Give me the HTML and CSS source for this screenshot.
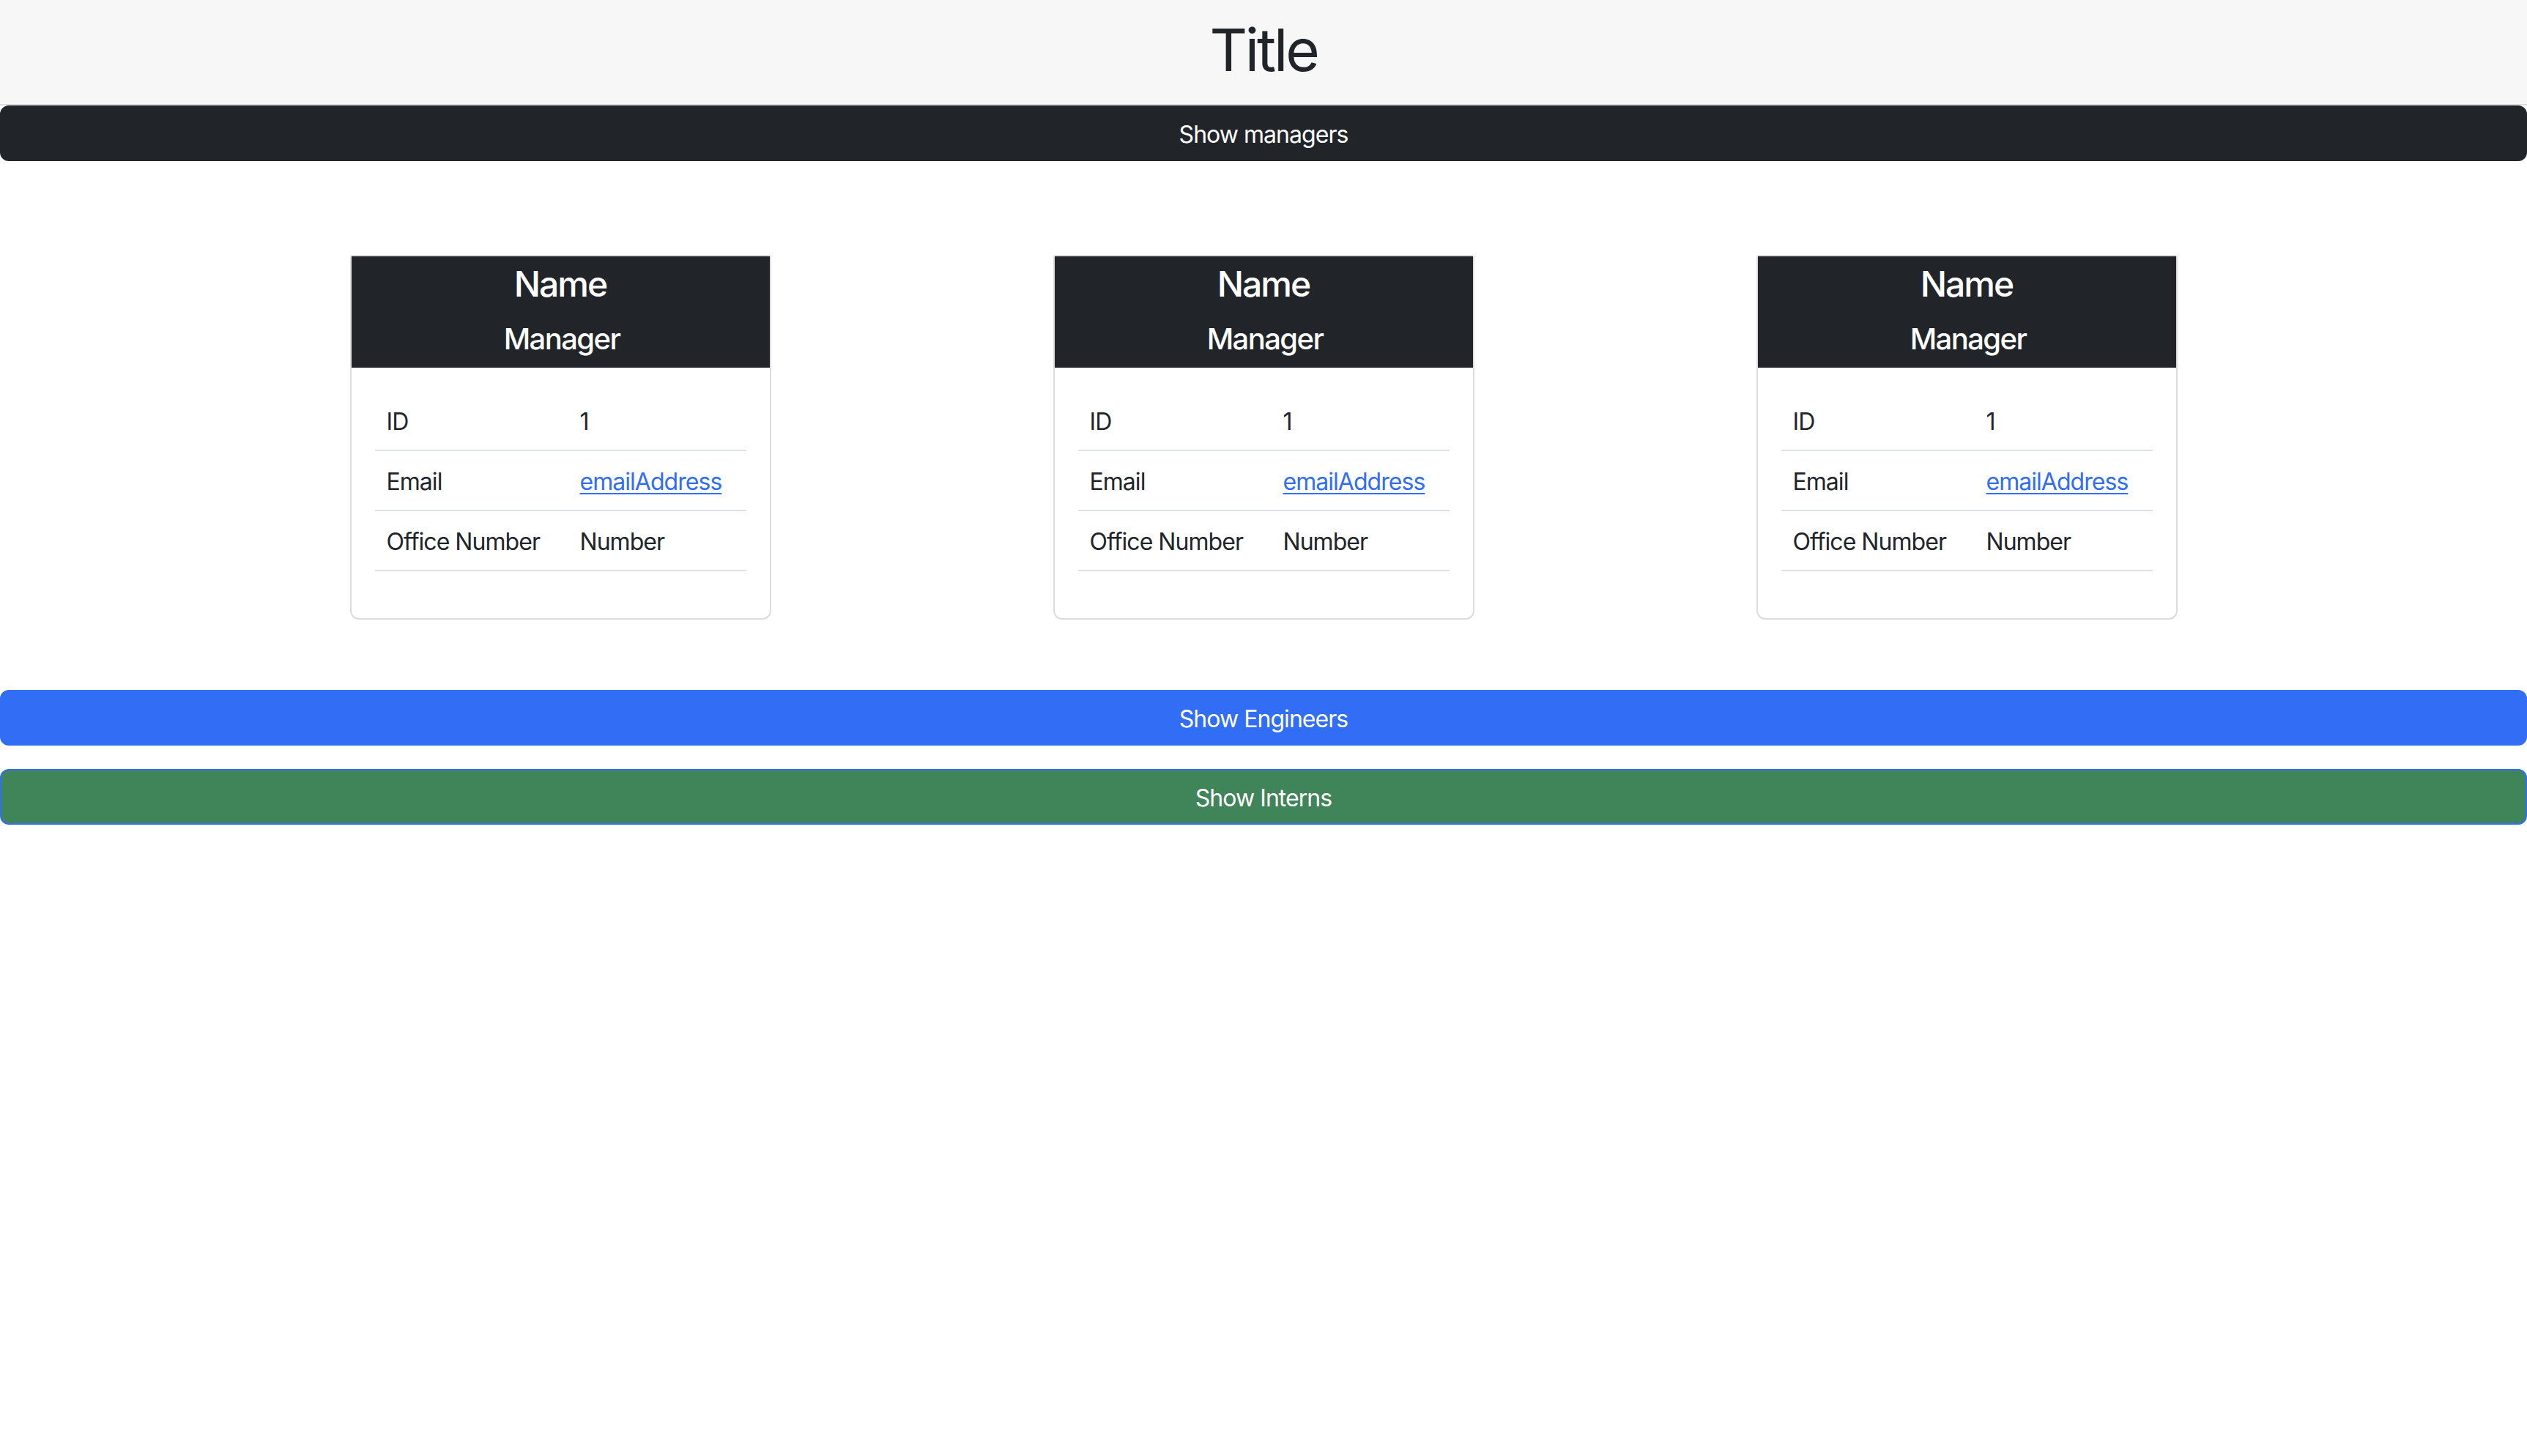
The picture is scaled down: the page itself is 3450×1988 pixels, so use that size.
FILE: index.html
```html
<!DOCTYPE html>
<html lang="en">
<head>
<meta charset="utf-8">
<title>Team</title>
<link rel="stylesheet" href="styles.css">
</head>
<body>
<header class="page-header">
  <h1 class="title">Title</h1>
</header>
<button class="btn btn-dark" type="button">Show managers</button>

<section class="cards">
  <div class="col">
    <article class="card">
      <div class="card-header">
        <h4 class="card-name">Name</h4>
        <h5 class="card-role">Manager</h5>
      </div>
      <div class="card-body">
        <table class="info">
          <tr><td class="label">ID</td><td>1</td></tr>
          <tr><td class="label">Email</td><td><a href="#" class="link">emailAddress</a></td></tr>
          <tr><td class="label">Office Number</td><td>Number</td></tr>
        </table>
      </div>
    </article>
  </div>
  <div class="col">
    <article class="card">
      <div class="card-header">
        <h4 class="card-name">Name</h4>
        <h5 class="card-role">Manager</h5>
      </div>
      <div class="card-body">
        <table class="info">
          <tr><td class="label">ID</td><td>1</td></tr>
          <tr><td class="label">Email</td><td><a href="#" class="link">emailAddress</a></td></tr>
          <tr><td class="label">Office Number</td><td>Number</td></tr>
        </table>
      </div>
    </article>
  </div>
  <div class="col">
    <article class="card">
      <div class="card-header">
        <h4 class="card-name">Name</h4>
        <h5 class="card-role">Manager</h5>
      </div>
      <div class="card-body">
        <table class="info">
          <tr><td class="label">ID</td><td>1</td></tr>
          <tr><td class="label">Email</td><td><a href="#" class="link">emailAddress</a></td></tr>
          <tr><td class="label">Office Number</td><td>Number</td></tr>
        </table>
      </div>
    </article>
  </div>
</section>

<button class="btn btn-primary" type="button">Show Engineers</button>
<button class="btn btn-success" type="button">Show Interns</button>
</body>
</html>
```

FILE: styles.css
```css
* { box-sizing: border-box; }

html, body {
  margin: 0;
  padding: 0;
  background: #ffffff;
}

body {
  font-family: Inter, "Liberation Sans", Arial, sans-serif;
  font-size: 32px;
  line-height: 48px;
  letter-spacing: -0.03em;
  color: #212529;
}

.page-header {
  background: #f7f7f7;
  border-bottom: 2px solid #dadada;
  padding: 20px 0 26px;
  text-align: center;
}

.title {
  margin: 0;
  font-size: 80px;
  line-height: 96px;
  font-weight: 400;
  letter-spacing: -0.04em;
  color: #212529;
}

.btn {
  display: block;
  width: 100%;
  margin: 0;
  padding: 14px 24px 10px;
  font-family: inherit;
  font-size: 32px;
  line-height: 48px;
  font-weight: 400;
  letter-spacing: -0.03em;
  color: #ffffff;
  text-align: center;
  border: 2px solid transparent;
  border-radius: 12px;
  cursor: pointer;
}

.btn-dark {
  background: #212529;
  border-color: #212529;
}

.btn-primary {
  background: #316df5;
  border-color: #316df5;
  margin-bottom: 32px;
}

.btn-success {
  background: #40845a;
  border-color: #316df5;
}

.cards {
  display: grid;
  grid-template-columns: repeat(3, 960px);
  justify-content: center;
  padding: 128px 0 96px;
}

.col {
  display: flex;
  justify-content: center;
}

.card {
  width: 575px;
  border: 2px solid #dcdcdc;
  border-radius: 4px 4px 12px 12px;
  background: #ffffff;
}

.card-header {
  background: #212529;
  color: #ffffff;
  text-align: center;
  padding: 9px 0 15px;
}

.card-name {
  margin: 0 0 22px;
  font-size: 48px;
  line-height: 58px;
  font-weight: 500;
  letter-spacing: -0.04em;
}

.card-role {
  margin: 0;
  font-size: 40px;
  line-height: 48px;
  font-weight: 500;
  letter-spacing: -0.04em;
  padding-left: 4px;
}

.card-body {
  padding: 32px;
}

.info {
  width: 100%;
  border-collapse: collapse;
  margin-bottom: 32px;
}

.info td {
  padding: 18px 16px 14px;
  border-bottom: 2px solid #dee2e6;
  vertical-align: top;
  text-align: left;
}

.info td.label {
  width: 264px;
}

.link {
  color: #316df5;
  text-decoration: underline;
  text-underline-offset: 4px;
  text-decoration-thickness: 2px;
}
```
